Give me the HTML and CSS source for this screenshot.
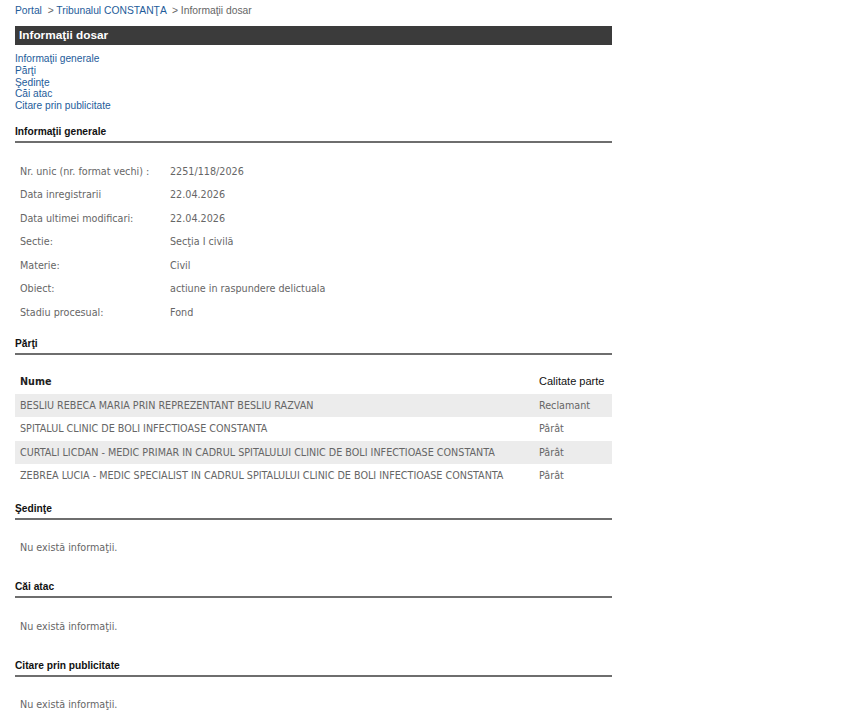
FILE: index.html
```html
<!DOCTYPE html>
<html lang="ro">
<head>
<meta charset="utf-8">
<title>Informații dosar</title>
<link rel="stylesheet" href="styles.css">
</head>
<body>
<div class="page">
  <div class="crumbs"><a href="#">Portal</a> &nbsp;&gt; <a href="#">Tribunalul CONSTANŢA</a> &nbsp;&gt; <span class="current">Informaţii dosar</span></div>
  <div class="bar">Informaţii dosar</div>
  <div class="nav">
    <a href="#">Informaţii generale</a>
    <a href="#">Părţi</a>
    <a href="#">Şedinţe</a>
    <a href="#">Căi atac</a>
    <a href="#">Citare prin publicitate</a>
  </div>

  <h2 class="heading h-info">Informaţii generale</h2>
  <table class="info">
    <tr><td class="lbl">Nr. unic (nr. format vechi) :</td><td>2251/118/2026</td></tr>
    <tr><td class="lbl">Data inregistrarii</td><td>22.04.2026</td></tr>
    <tr><td class="lbl">Data ultimei modificari:</td><td>22.04.2026</td></tr>
    <tr><td class="lbl">Sectie:</td><td>Secţia I civilă</td></tr>
    <tr><td class="lbl">Materie:</td><td>Civil</td></tr>
    <tr><td class="lbl">Obiect:</td><td>actiune in raspundere delictuala</td></tr>
    <tr><td class="lbl">Stadiu procesual:</td><td>Fond</td></tr>
  </table>

  <h2 class="heading h-parti">Părţi</h2>
  <table class="parti">
    <tr class="head"><th class="name">Nume</th><th class="cal">Calitate parte</th></tr>
    <tr class="alt"><td>BESLIU REBECA MARIA PRIN REPREZENTANT BESLIU RAZVAN</td><td>Reclamant</td></tr>
    <tr><td>SPITALUL CLINIC DE BOLI INFECTIOASE CONSTANTA</td><td>Pârât</td></tr>
    <tr class="alt"><td>CURTALI LICDAN - MEDIC PRIMAR IN CADRUL SPITALULUI CLINIC DE BOLI INFECTIOASE CONSTANTA</td><td>Pârât</td></tr>
    <tr><td>ZEBREA LUCIA - MEDIC SPECIALIST IN CADRUL SPITALULUI CLINIC DE BOLI INFECTIOASE CONSTANTA</td><td>Pârât</td></tr>
  </table>

  <h2 class="heading h-sed">Şedinţe</h2>
  <p class="empty">Nu există informaţii.</p>

  <h2 class="heading">Căi atac</h2>
  <p class="empty">Nu există informaţii.</p>

  <h2 class="heading">Citare prin publicitate</h2>
  <p class="empty">Nu există informaţii.</p>
</div>
</body>
</html>
```
FILE: styles.css
```css
html, body {
  margin: 0;
  padding: 0;
  background: #ffffff;
}
body {
  font-family: "Liberation Sans", Arial, sans-serif;
  color: #333333;
}
.page {
  width: 597px;
  padding: 5px 0 0 15px;
}
a {
  color: #1e5c9a;
  text-decoration: none;
}
.crumbs {
  font-size: 10.3px;
  line-height: 12px;
  height: 12px;
  color: #666666;
}
.crumbs .current {
  color: #666666;
}
.bar {
  margin-top: 9px;
  height: 19px;
  line-height: 19px;
  background: #3b3b3b;
  color: #ffffff;
  font-weight: bold;
  font-size: 11.8px;
  padding-left: 4px;
}
.nav {
  margin-top: 8px;
  display: flex;
  flex-direction: column;
  font-size: 10.2px;
  line-height: 11.75px;
}
.heading {
  margin: 13.25px 0 0 0;
  font-size: 10.2px;
  font-weight: bold;
  line-height: 12px;
  padding-bottom: 3px;
  border-bottom: 2px solid #6e6e6e;
  color: #111111;
}
.h-info {
  margin-top: 14.25px;
}
.info, .parti {
  border-collapse: collapse;
  width: 597px;
  font-family: "DejaVu Sans Condensed", "DejaVu Sans", sans-serif;
  font-size: 10.7px;
  color: #666666;
}
.info {
  margin-top: 16.25px;
}
.info td {
  height: 23.5px;
  padding: 0 0 0 5px;
  vertical-align: middle;
  white-space: nowrap;
}
.info td.lbl {
  width: 145px;
}
.h-parti {
  margin-top: 14.25px;
}
.parti {
  margin-top: 13.5px;
}
.parti td, .parti th {
  height: 23.5px;
  padding: 0 0 0 5px;
  text-align: left;
  vertical-align: middle;
  white-space: nowrap;
}
.parti tr.head th {
  height: 25px;
}
.parti th.name {
  color: #222222;
  font-weight: bold;
}
.parti th.cal {
  width: 73px;
  font-family: "Liberation Sans", Arial, sans-serif;
  font-weight: normal;
  font-size: 11px;
  color: #111111;
}
.parti tr.alt td {
  background: #ececec;
}
.h-sed {
  margin-top: 15.25px;
}
.empty {
  margin: 16.5px 0 21px 0;
  padding-left: 5px;
  line-height: 24px;
  font-family: "DejaVu Sans Condensed", "DejaVu Sans", sans-serif;
  font-size: 10.7px;
  color: #666666;
}
.empty + .heading {
  margin-top: 0;
}
```
